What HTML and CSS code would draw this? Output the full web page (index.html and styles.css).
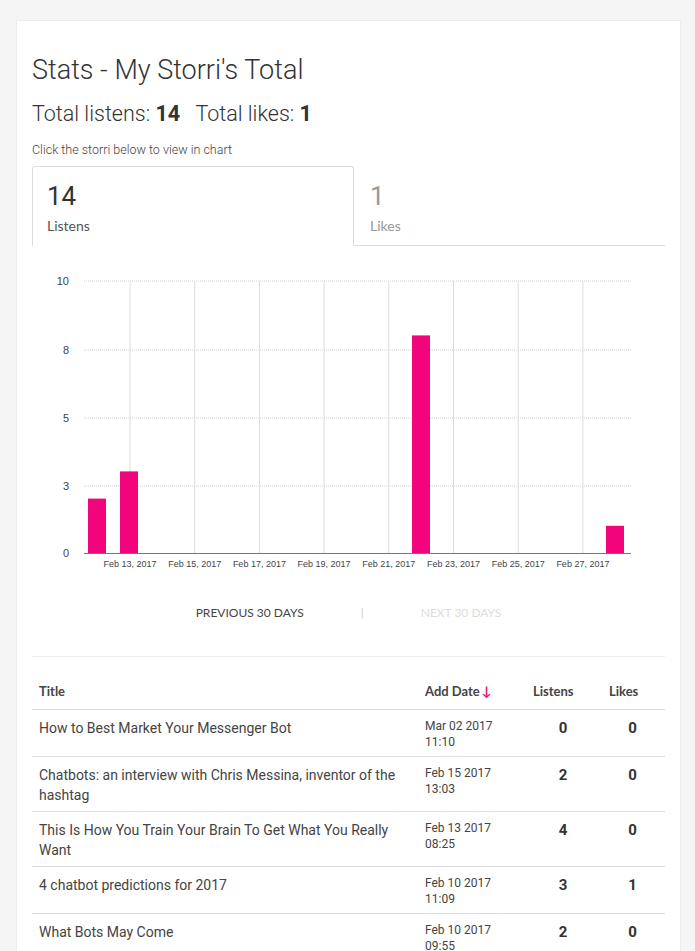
FILE: index.html
```html
<!DOCTYPE html>
<html>
<head>
<meta charset="utf-8">
<link rel="stylesheet" href="styles.css">
</head>
<body>
<div class="card">
  <h1 class="title">Stats - My Storri's Total</h1>
  <div class="totals">Total listens: <b>14</b>&nbsp;&nbsp; Total likes: <b>1</b></div>
  <div class="hint">Click the storri below to view in chart</div>
  <div class="tabs">
    <div class="tab active"><div class="tab-num">14</div><div class="tab-label">Listens</div></div>
    <div class="tab"><div class="tab-num">1</div><div class="tab-label">Likes</div></div>
  </div>
  <svg class="chart" width="633" height="330" viewBox="0 0 633 330">
    <g class="hgrid">
      <line x1="52" y1="35" x2="599" y2="35"/>
      <line x1="52" y1="104" x2="599" y2="104"/>
      <line x1="52" y1="172" x2="599" y2="172"/>
      <line x1="52" y1="240" x2="599" y2="240"/>
    </g>
    <g class="vgrid">
      <line x1="98" y1="35" x2="98" y2="307"/>
      <line x1="162.7" y1="35" x2="162.7" y2="307"/>
      <line x1="227.4" y1="35" x2="227.4" y2="307"/>
      <line x1="292.1" y1="35" x2="292.1" y2="307"/>
      <line x1="356.8" y1="35" x2="356.8" y2="307"/>
      <line x1="421.5" y1="35" x2="421.5" y2="307"/>
      <line x1="486.2" y1="35" x2="486.2" y2="307"/>
      <line x1="550.9" y1="35" x2="550.9" y2="307"/>
    </g>
    <g class="bars">
      <rect x="56" y="252.6" width="18" height="54.4"/>
      <rect x="88" y="225.4" width="18" height="81.6"/>
      <rect x="380" y="89.4" width="18" height="217.6"/>
      <rect x="574" y="279.8" width="18" height="27.2"/>
    </g>
    <line class="axis" x1="52" y1="307.5" x2="599" y2="307.5"/>
    <g class="ylab">
      <text x="37" y="39">10</text>
      <text x="37" y="108">8</text>
      <text x="37" y="176">5</text>
      <text x="37" y="244">3</text>
      <text x="37" y="311">0</text>
    </g>
    <g class="xlab">
      <text x="98" y="321">Feb 13, 2017</text>
      <text x="162.7" y="321">Feb 15, 2017</text>
      <text x="227.4" y="321">Feb 17, 2017</text>
      <text x="292.1" y="321">Feb 19, 2017</text>
      <text x="356.8" y="321">Feb 21, 2017</text>
      <text x="421.5" y="321">Feb 23, 2017</text>
      <text x="486.2" y="321">Feb 25, 2017</text>
      <text x="550.9" y="321">Feb 27, 2017</text>
    </g>
  </svg>
  <div class="pager">
    <span class="pager-btn">PREVIOUS 30 DAYS</span>
    <span class="pager-sep">|</span>
    <span class="pager-btn disabled">NEXT 30 DAYS</span>
  </div>
  <div class="divider"></div>
  <table class="stats">
    <colgroup><col class="c-title"><col class="c-date"><col class="c-num"><col class="c-likes"></colgroup>
    <thead>
      <tr><th>Title</th><th>Add Date<span class="sort">&#8595;</span></th><th>Listens</th><th class="th-likes">Likes</th></tr>
    </thead>
    <tbody>
      <tr><td class="t">How to Best Market Your Messenger Bot</td><td class="d">Mar 02 2017<br>11:10</td><td class="n">0</td><td class="n">0</td></tr>
      <tr><td class="t">Chatbots: an interview with Chris Messina, inventor of the hashtag</td><td class="d">Feb 15 2017<br>13:03</td><td class="n">2</td><td class="n">0</td></tr>
      <tr><td class="t">This Is How You Train Your Brain To Get What You Really Want</td><td class="d">Feb 13 2017<br>08:25</td><td class="n">4</td><td class="n">0</td></tr>
      <tr><td class="t">4 chatbot predictions for 2017</td><td class="d">Feb 10 2017<br>11:09</td><td class="n">3</td><td class="n">1</td></tr>
      <tr><td class="t">What Bots May Come</td><td class="d">Feb 10 2017<br>09:55</td><td class="n">2</td><td class="n">0</td></tr>
    </tbody>
  </table>
</div>
</body>
</html>
```
FILE: styles.css
```css
html, body { margin: 0; padding: 0; }
body {
  background: #f5f5f5;
  font-family: Roboto, "Liberation Sans", sans-serif;
  color: #333;
}
.card {
  margin: 21px 15px 0 17px;
  background: #fff;
  padding: 15px 15px 20px 15px;
  box-shadow: 0 0 0 1px #ececec;
  min-height: 960px;
  box-sizing: border-box;
}
.title {
  margin: 18px 0 0 0;
  font-family: "Roboto Light", Roboto, sans-serif;
  font-weight: 300;
  font-size: 27px;
  line-height: 32px;
  color: #333;
}
.totals {
  margin-top: 14px;
  font-family: "Roboto Light", Roboto, sans-serif;
  font-weight: 300;
  font-size: 21.5px;
  line-height: 28px;
  color: #333;
}
.totals b { font-family: Roboto, sans-serif; font-weight: 700; }
.hint {
  margin-top: 14px;
  font-family: "Roboto Light", Roboto, sans-serif;
  font-weight: 300;
  font-size: 12.5px;
  line-height: 16px;
  color: #444;
}
.tabs {
  margin-top: 8px;
  display: flex;
}
.tab {
  flex: 1 1 0;
  padding: 15px 15px 10px 16px;
  border-bottom: 1px solid #ddd;
}
.tab.active {
  border: 1px solid #ddd;
  border-bottom: 1px solid transparent;
  border-radius: 3px 3px 0 0;
  padding: 14px 15px 10px 14px;
  flex: 0 0 322px;
  box-sizing: border-box;
}
.tab-num {
  font-size: 26px;
  line-height: 30px;
  font-weight: 400;
  color: #333;
}
.tab-label {
  margin-top: 6px;
  font-family: Lato, "Open Sans", sans-serif;
  font-size: 14px;
  line-height: 18px;
  color: #555;
}
.tab:not(.active) .tab-num { color: #999; }
.tab:not(.active) .tab-label { color: #999; }
.chart { display: block; }
.hgrid line { stroke: #d4d4d4; stroke-width: 1; stroke-dasharray: 1 1; }
.vgrid line { stroke: #dcdcdc; stroke-width: 1; }
.bars rect { fill: #f2057c; }
.axis { stroke: #777; stroke-width: 1; }
.ylab text { font-family: Arial, "Liberation Sans", sans-serif; font-size: 11px; fill: #444; text-anchor: end; }
.xlab text { font-family: Arial, "Liberation Sans", sans-serif; font-size: 9px; fill: #444; text-anchor: middle; }
.pager {
  display: flex;
  justify-content: center;
  align-items: center;
  gap: 57px;
  margin-top: 29px;
  font-family: Lato, "Open Sans", sans-serif;
  font-size: 12px;
  line-height: 16px;
  color: #444;
}
.pager-sep { color: #ccc; }
.pager-btn.disabled { color: #ddd; }
.divider {
  margin-top: 35px;
  border-top: 1px solid #eee;
}
.stats {
  width: 100%;
  border-collapse: collapse;
  table-layout: fixed;
  margin-top: 18px;
}
.c-title { width: 386px; }
.c-date { width: 108px; }
.c-num { width: 74px; }
.stats th {
  text-align: left;
  font-family: Lato, "Open Sans", sans-serif;
  font-weight: 700;
  font-size: 13px;
  line-height: 18px;
  color: #444;
  padding: 7px 7px 9px 7px;
  border-bottom: 1px solid #ddd;
}
.stats th.th-likes { padding-left: 9px; }
.sort { color: #e8107a; font-weight: 700; margin-left: 2px; }
.stats td {
  vertical-align: top;
  padding: 8px 7px 6px 7px;
  border-bottom: 1px solid #ddd;
}
.t {
  font-size: 14px;
  line-height: 20px;
  color: #444;
}
.d {
  font-size: 12px;
  line-height: 16px;
  color: #444;
}
.n {
  text-align: center;
  font-size: 15px;
  line-height: 20px;
  font-weight: 700;
  color: #333;
}
```
